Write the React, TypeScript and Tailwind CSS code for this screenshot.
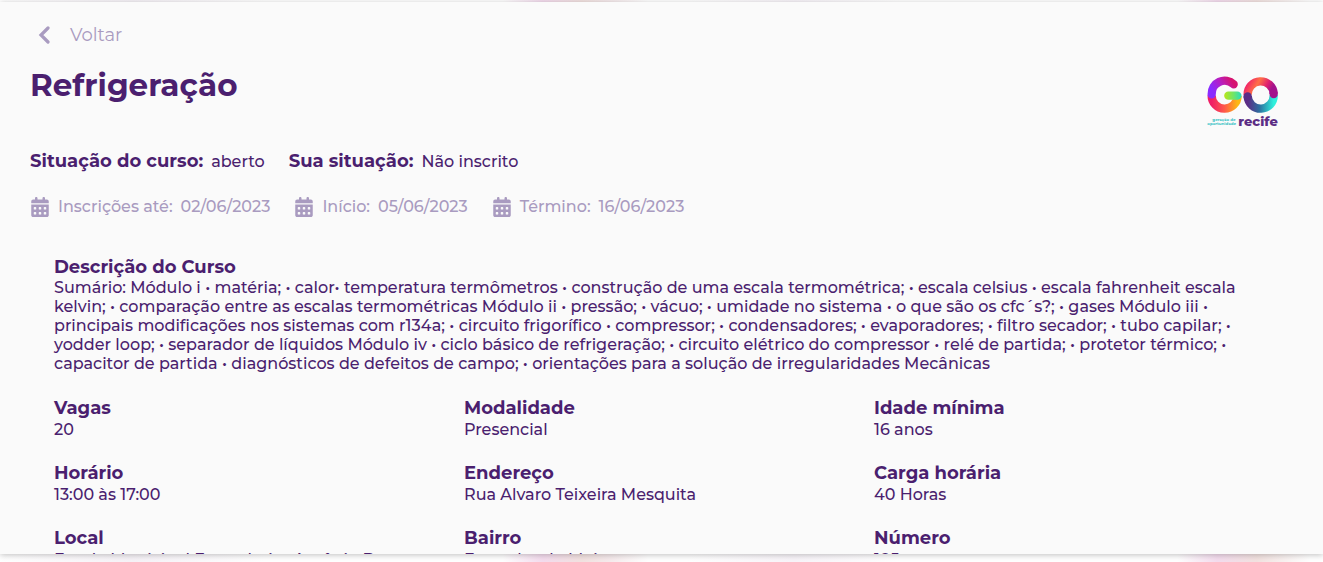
import { FaCalendarDays } from "react-icons/fa6";

const dates = [
  { label: "Inscrições até:", value: "02/06/2023" },
  { label: "Início:", value: "05/06/2023" },
  { label: "Término:", value: "16/06/2023" },
];

const details = [
  { label: "Vagas", value: "20" },
  { label: "Modalidade", value: "Presencial" },
  { label: "Idade mínima", value: "16 anos" },
  { label: "Horário", value: "13:00 às 17:00" },
  { label: "Endereço", value: "Rua Alvaro Teixeira Mesquita" },
  { label: "Carga horária", value: "40 Horas" },
  { label: "Local", value: "Escola Municipal Engenheiro Antônio Bezerra" },
  { label: "Bairro", value: "Engenho do Meio" },
  { label: "Número", value: "185" },
];

const summary =
  "Sumário: Módulo i • matéria; • calor• temperatura termômetros • construção de uma escala termométrica; • escala celsius • escala fahrenheit escala kelvin; • comparação entre as escalas termométricas Módulo ii • pressão; • vácuo; • umidade no sistema • o que são os cfc´s?; • gases Módulo iii • principais modificações nos sistemas com r134a; • circuito frigorífico • compressor; • condensadores; • evaporadores; • filtro secador; • tubo capilar; • yodder loop; • separador de líquidos Módulo iv • ciclo básico de refrigeração; • circuito elétrico do compressor • relé de partida; • protetor térmico; • capacitor de partida • diagnósticos de defeitos de campo; • orientações para a solução de irregularidades Mecânicas";

function Logo() {
  return (
    <svg viewBox="50 45 219 159" className="h-[53px] w-[73px]" role="img" aria-label="GO Recife">
      <defs>
        <linearGradient id="gTop" x1="0" y1="0.6" x2="1" y2="0.2">
          <stop offset="0" stopColor="#8a2bff" />
          <stop offset="0.5" stopColor="#b51fc4" />
          <stop offset="1" stopColor="#d6136f" />
        </linearGradient>
        <linearGradient id="gBottom" x1="0" y1="0" x2="1" y2="0">
          <stop offset="0" stopColor="#ef1f66" />
          <stop offset="0.5" stopColor="#ff5a4a" />
          <stop offset="1" stopColor="#fdb813" />
        </linearGradient>
        <linearGradient id="gBar" x1="104" y1="0" x2="156" y2="0" gradientUnits="userSpaceOnUse">
          <stop offset="0" stopColor="#b4e61e" />
          <stop offset="0.5" stopColor="#6fe56a" />
          <stop offset="1" stopColor="#1fdcc8" />
        </linearGradient>
        <linearGradient id="oTop" x1="0" y1="0" x2="1" y2="0.3">
          <stop offset="0" stopColor="#f0206a" />
          <stop offset="0.4" stopColor="#ff7045" />
          <stop offset="0.75" stopColor="#e0216f" />
          <stop offset="1" stopColor="#a3128c" />
        </linearGradient>
        <linearGradient id="oBottom" x1="0" y1="0" x2="1" y2="0">
          <stop offset="0" stopColor="#5b2d86" />
          <stop offset="0.45" stopColor="#2d6f9f" />
          <stop offset="1" stopColor="#2ff0dc" />
        </linearGradient>
      </defs>
      <g fill="none" strokeWidth="25">
        <path d="M64 106A39 39 0 0 0 142 108" stroke="url(#gBottom)" />
        <path d="M130 73A39 39 0 0 0 64 103" stroke="url(#gTop)" strokeLinecap="round" />
        <path d="M114 107H141" stroke="url(#gBar)" strokeLinecap="round" />
        <path d="M250 105A39 39 0 0 1 172 109" stroke="url(#oBottom)" />
        <path d="M172 105A39 39 0 0 1 250 101" stroke="url(#oTop)" />
        <path d="M250 101V102" stroke="#a3128c" strokeLinecap="round" />
        <path d="M172 109V110" stroke="#5b2d86" strokeLinecap="round" />
      </g>
      <g fontFamily="Montserrat, Inter, sans-serif" fontWeight="700">
        <text x="66" y="184" fontSize="12" fill="#35bfc4">geração de</text>
        <text x="51" y="196" fontSize="12" fill="#35bfc4">oportunidade</text>
        <text x="144" y="197" fontSize="39" fontWeight="800" fill="#5c2d85">recife</text>
      </g>
    </svg>
  );
}

export default function App() {
  return (
    <div className="flex h-screen flex-col bg-white bg-[linear-gradient(90deg,#fff_0%,#f6f2f7_10%,#fff_20%,#fff_38%,#f4dcee_41%,#f2e2e0_44%,#f6eaec_46%,#fff_49%,#fff_52%,#f8f4f9_60%,#fff_68%,#fff_89%,#f4dcee_92%,#f2e2e0_95%,#fff_99%)] pt-0.5 pb-2 font-['Montserrat','Inter',sans-serif] font-medium text-[#4b1f6f]">
      <main className="min-h-0 flex-1 overflow-y-auto bg-[#fafafa] pt-[21px] pr-[15px] pl-[30px] shadow-[0_1px_6px_rgba(0,0,0,0.25)] [scrollbar-width:none]">
        <button type="button" className="flex h-6 items-center gap-5 pl-2 text-[18px] leading-6 font-normal text-[#a99bc0]">
          <svg viewBox="0 0 12 18" className="h-[18px] w-3" aria-hidden="true">
            <path d="M10 2L3 9L10 16" fill="none" stroke="currentColor" strokeWidth="3.2" strokeLinecap="round" />
          </svg>
          Voltar
        </button>

        <header className="flex h-20 items-start justify-between pr-7">
          <h1 className="pt-[18px] text-[31px] leading-10 font-bold">Refrigeração</h1>
          <div className="pt-7">
            <Logo />
          </div>
        </header>

        <dl className="mt-[22px] flex h-6 items-baseline gap-6">
          <div className="flex items-baseline gap-2">
            <dt className="text-[18px] leading-6 font-bold">Situação do curso:</dt>
            <dd className="text-[16px] leading-6">aberto</dd>
          </div>
          <div className="flex items-baseline gap-2">
            <dt className="text-[18px] leading-6 font-bold">Sua situação:</dt>
            <dd className="text-[16px] leading-6">Não inscrito</dd>
          </div>
        </dl>

        <ul className="mt-[22px] flex gap-6 text-[16px] leading-6 text-[#a99bc0]">
          {dates.map((d) => (
            <li key={d.label} className="flex items-center gap-2">
              <FaCalendarDays className="h-5 w-5" />
              <span>{d.label}</span>
              <span>{d.value}</span>
            </li>
          ))}
        </ul>

        <section className="mt-[37px] px-6">
          <h2 className="text-[18px] leading-[22px] font-bold">Descrição do Curso</h2>
          <p className="text-[16px] leading-[normal]">{summary}</p>
          <dl className="mt-6 grid grid-cols-3 gap-y-[21px]">
            {details.map((d) => (
              <div key={d.label}>
                <dt className="text-[18px] leading-[22px] font-bold">{d.label}</dt>
                <dd className="text-[16px] leading-[22px]">{d.value}</dd>
              </div>
            ))}
          </dl>
        </section>
      </main>
    </div>
  );
}
